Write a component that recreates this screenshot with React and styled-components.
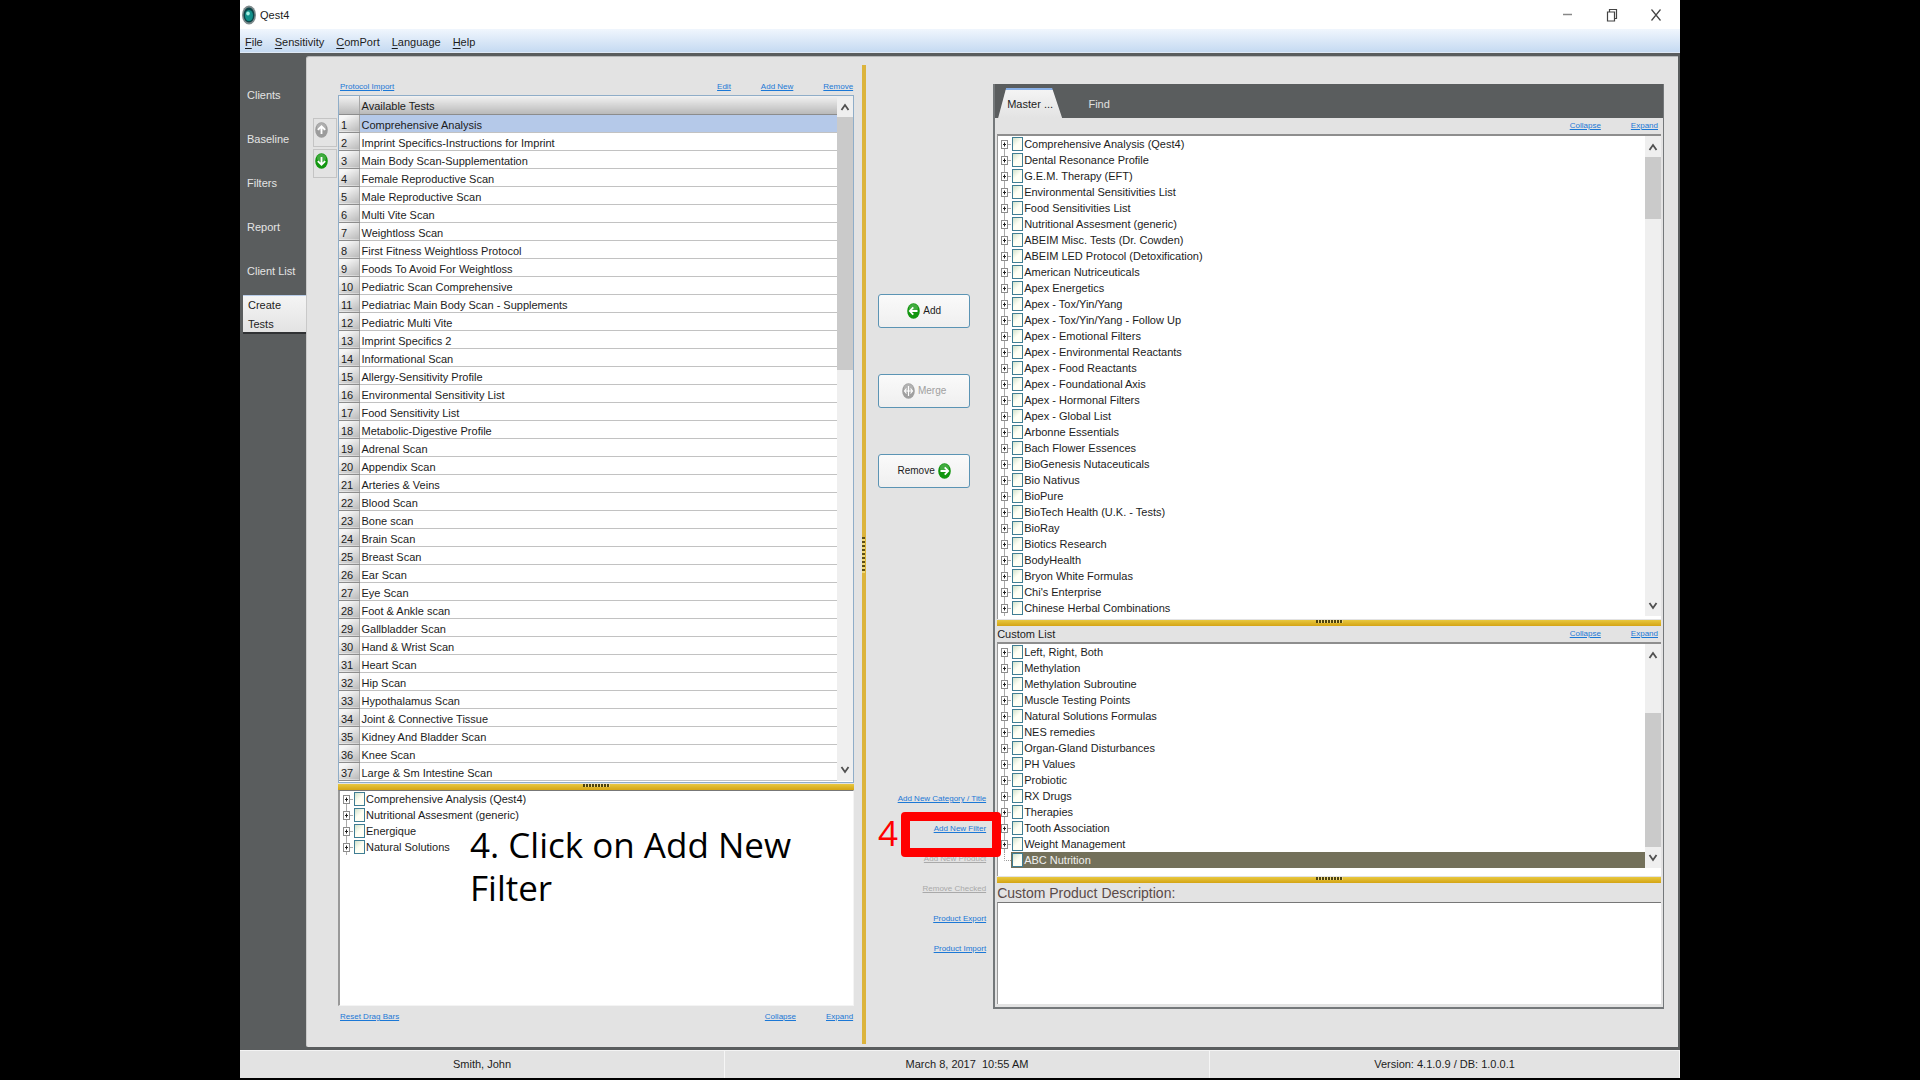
import React from 'react';
import styled, {createGlobalStyle} from 'styled-components';

const tests = [
    'Comprehensive Analysis', 'Imprint Specifics-Instructions for Imprint', 'Main Body Scan-Supplementation',
    'Female Reproductive Scan', 'Male Reproductive Scan', 'Multi Vite Scan', 'Weightloss Scan',
    'First Fitness Weightloss Protocol', 'Foods To Avoid For Weightloss', 'Pediatric Scan Comprehensive',
    'Pediatriac Main Body Scan - Supplements', 'Pediatric Multi Vite', 'Imprint Specifics 2',
    'Informational Scan', 'Allergy-Sensitivity Profile', 'Environmental Sensitivity List',
    'Food Sensitivity List', 'Metabolic-Digestive Profile', 'Adrenal Scan', 'Appendix Scan',
    'Arteries & Veins', 'Blood Scan', 'Bone scan', 'Brain Scan', 'Breast Scan', 'Ear Scan', 'Eye Scan',
    'Foot & Ankle scan', 'Gallbladder Scan', 'Hand & Wrist Scan', 'Heart Scan', 'Hip Scan',
    'Hypothalamus Scan', 'Joint & Connective Tissue', 'Kidney And Bladder Scan', 'Knee Scan',
    'Large & Sm Intestine Scan'
];

const selectedTree = ['Comprehensive Analysis (Qest4)', 'Nutritional Assesment (generic)', 'Energique', 'Natural Solutions'];

const masterTree = [
    'Comprehensive Analysis (Qest4)', 'Dental Resonance Profile', 'G.E.M. Therapy (EFT)',
    'Environmental Sensitivities List', 'Food Sensitivities List', 'Nutritional Assesment (generic)',
    'ABEIM Misc. Tests (Dr. Cowden)', 'ABEIM LED Protocol (Detoxification)', 'American Nutriceuticals',
    'Apex Energetics', 'Apex - Tox/Yin/Yang', 'Apex - Tox/Yin/Yang - Follow Up', 'Apex - Emotional Filters',
    'Apex - Environmental Reactants', 'Apex - Food Reactants', 'Apex - Foundational Axis',
    'Apex - Hormonal Filters', 'Apex - Global List', 'Arbonne Essentials', 'Bach Flower Essences',
    'BioGenesis Nutaceuticals', 'Bio Nativus', 'BioPure', 'BioTech Health (U.K. - Tests)', 'BioRay',
    'Biotics Research', 'BodyHealth', 'Bryon White Formulas', "Chi's Enterprise", 'Chinese Herbal Combinations'
];

const customTree = [
    'Left, Right, Both', 'Methylation', 'Methylation Subroutine', 'Muscle Testing Points',
    'Natural Solutions Formulas', 'NES remedies', 'Organ-Gland Disturbances', 'PH Values', 'Probiotic',
    'RX Drugs', 'Therapies', 'Tooth Association', 'Weight Management', 'ABC Nutrition'
];

function ArrowIcon({turn = 0, color = '#12960f', both}) {
    return (
        <svg width="13" height="16" viewBox="0 0 13 16" aria-hidden="true">
            <ellipse cx="6.5" cy="8" rx="6.3" ry="7.8" fill={color} />
            <ellipse cx="6.5" cy="5" rx="4.5" ry="4" fill="#fff" opacity="0.2" />
            <g transform={`rotate(${turn} 6.5 8)`} fill="none" stroke="#fff" strokeWidth="1.8">
                {both
                    ? <path d="M6.5 3v10M2.5 8h8M4.5 5.5L2.5 8l2 2.5M8.5 5.5l2 2.5-2 2.5" strokeWidth="1.2" />
                    : <path d="M10.5 8H3M6.3 4.3L2.8 8l3.5 3.7" />}
            </g>
        </svg>
    )
}

function Chevron({down}) {
    return (
        <svg width="10" height="8" viewBox="0 0 10 8" aria-hidden="true">
            <path d={down ? 'M1.5 1L5 6l3.5-5' : 'M1.5 7L5 2l3.5 5'} fill="none" stroke="#505050" strokeWidth="1.8" />
        </svg>
    )
}

function Scrollbar({before, size, after}) {
    return (
        <Track>
            <ScrollButton aria-label="Scroll up"><Chevron /></ScrollButton>
            <Space grow={before} />
            <Thumb grow={size} />
            <Space grow={after} />
            <ScrollButton aria-label="Scroll down"><Chevron down /></ScrollButton>
        </Track>
    )
}

function Tree({items, id, selected}) {
    return (
        <TreeList>
            {items.map((item, i) => (
                <TreeRow key={item}>
                    {item === selected
                        ? <svg width="13" height="16" aria-hidden="true"><path d="M6.5 0v8.5H13" fill="none" stroke="#999" strokeDasharray="1 1" /></svg>
                        : <Toggle aria-label={`Expand ${item}`}>
                            <svg width="13" height="16" aria-hidden="true">
                                <path d={i === 0 ? 'M6.5 12v4M10 8.5h3' : 'M6.5 0v16M10 8.5h3'} stroke="#aaa" />
                                <rect x="3.5" y="4.5" width="6" height="8" fill="#fff" stroke="#8c8c8c" />
                                <path d="M5 8.500h3M6.5 6.500v4" stroke="#222" />
                            </svg>
                        </Toggle>}
                    <TreeLabel htmlFor={`${id}-${i}`} active={item === selected ? 1 : 0}>
                        <Check type="checkbox" id={`${id}-${i}`} />
                        {item}
                    </TreeLabel>
                </TreeRow>
            ))}
        </TreeList>
    )
}

function Splitter() {
    return <GoldBar><Grip /></GoldBar>
}

function App() {
    return (
        <Stage>
            <GlobalStyle />
            <AppWindow>
                <TitleBar>
                    <svg width="14" height="20" viewBox="0 0 14 20" aria-hidden="true">
                        <ellipse cx="7" cy="10" rx="7" ry="9.5" fill="#7d8a8c" />
                        <ellipse cx="7" cy="10" rx="5.5" ry="7.5" fill="#0c4548" />
                        <ellipse cx="7" cy="10.5" rx="4" ry="5.5" fill="#11908a" />
                        <ellipse cx="6" cy="8.5" rx="1.8" ry="2" fill="#a5f0e2" />
                    </svg>
                    <Title>Qest4</Title>
                    <WindowButton aria-label="Minimize">
                        <svg width="12" height="14"><path d="M1 6.5h9" stroke="#888" strokeWidth="1.5" /></svg>
                    </WindowButton>
                    <WindowButton aria-label="Restore">
                        <svg width="12" height="14"><path d="M1.5 4h7v9h-7zM3.5 4V1.5h7v9H8.5" fill="none" stroke="#444" strokeWidth="1.2" /></svg>
                    </WindowButton>
                    <WindowButton aria-label="Close">
                        <svg width="12" height="14"><path d="M1.5 1.5l9 11M10.5 1.5l-9 11" stroke="#444" strokeWidth="1.2" /></svg>
                    </WindowButton>
                </TitleBar>
                <MenuBar>
                    {['File', 'Sensitivity', 'ComPort', 'Language', 'Help'].map(m => (
                        <MenuItem key={m}><u>{m[0]}</u>{m.slice(1)}</MenuItem>
                    ))}
                </MenuBar>
                <Body>
                    <Sidebar>
                        {['Clients', 'Baseline', 'Filters', 'Report', 'Client List'].map(s => (
                            <SideTab key={s}>{s}</SideTab>
                        ))}
                        <ActiveSideTab>Create Tests</ActiveSideTab>
                    </Sidebar>
                    <Content>
                        <OrderColumn>
                            <OrderButton aria-label="Move up" disabled><ArrowIcon turn={90} color="#9b9b9b" /></OrderButton>
                            <OrderButton aria-label="Move down"><ArrowIcon turn={-90} /></OrderButton>
                        </OrderColumn>
                        <LeftPanel>
                            <LinkBar>
                                <TextLink href="#import">Protocol Import</TextLink>
                                <LinkGroup>
                                    <TextLink href="#edit">Edit</TextLink>
                                    <TextLink href="#new">Add New</TextLink>
                                    <TextLink href="#remove">Remove</TextLink>
                                </LinkGroup>
                            </LinkBar>
                            <TableFrame>
                                <TestTable>
                                    <thead>
                                        <tr><NumberHead aria-label="Number" /><TestHead>Available Tests</TestHead></tr>
                                    </thead>
                                    <tbody>
                                        {tests.map((test, i) => (
                                            <tr key={test}>
                                                <NumberCell>{i + 1}</NumberCell>
                                                <TestCell active={i === 0 ? 1 : 0}>{test}</TestCell>
                                            </tr>
                                        ))}
                                    </tbody>
                                </TestTable>
                                <Scrollbar before={0} size={254} after={390} />
                            </TableFrame>
                            <Splitter />
                            <SelectedBox>
                                <Tree items={selectedTree} id="selected" />
                                <Callout>4. Click on Add New Filter</Callout>
                            </SelectedBox>
                            <LinkBar>
                                <TextLink href="#reset">Reset Drag Bars</TextLink>
                                <LinkGroup>
                                    <TextLink href="#collapse">Collapse</TextLink>
                                    <TextLink href="#expand">Expand</TextLink>
                                </LinkGroup>
                            </LinkBar>
                        </LeftPanel>
                        <VerticalBar><SideGrip /></VerticalBar>
                        <Actions>
                            <ActionButton><ArrowIcon />Add</ActionButton>
                            <ActionButton disabled><ArrowIcon color="#a0a0a0" both />Merge</ActionButton>
                            <ActionButton>Remove<ArrowIcon turn={180} /></ActionButton>
                            <ActionLinks>
                                <TextLink href="#category">Add New Category / Title</TextLink>
                                <Marked>
                                    <StepNumber>4</StepNumber>
                                    <Highlight />
                                    <TextLink href="#filter">Add New Filter</TextLink>
                                </Marked>
                                <TextLink href="#product" muted="true">Add New Product</TextLink>
                                <TextLink href="#checked" muted="true">Remove Checked</TextLink>
                                <TextLink href="#export">Product Export</TextLink>
                                <TextLink href="#product-import">Product Import</TextLink>
                            </ActionLinks>
                        </Actions>
                        <RightPanel>
                            <TabStrip>
                                <ActiveTab>Master ...</ActiveTab>
                                <Tab>Find</Tab>
                            </TabStrip>
                            <PanelBar>
                                <span />
                                <LinkGroup>
                                    <TextLink href="#collapse-master">Collapse</TextLink>
                                    <TextLink href="#expand-master">Expand</TextLink>
                                </LinkGroup>
                            </PanelBar>
                            <TreeBox room={3}>
                                <Tree items={masterTree} id="master" />
                                <Scrollbar before={0} size={62} after={376} />
                            </TreeBox>
                            <Splitter />
                            <PanelBar>
                                Custom List
                                <LinkGroup>
                                    <TextLink href="#collapse-custom">Collapse</TextLink>
                                    <TextLink href="#expand-custom">Expand</TextLink>
                                </LinkGroup>
                            </PanelBar>
                            <TreeBox room={8}>
                                <Tree items={customTree} id="custom" selected="ABC Nutrition" />
                                <Scrollbar before={50} size={139} after={0} />
                            </TreeBox>
                            <Splitter />
                            <DescriptionLabel htmlFor="description">Custom Product Description:</DescriptionLabel>
                            <Description id="description" />
                        </RightPanel>
                    </Content>
                </Body>
                <StatusBar>
                    <Status>Smith, John</Status>
                    <Status>March 8, 2017&nbsp; 10:55 AM</Status>
                    <Status>Version: 4.1.0.9 / DB: 1.0.0.1</Status>
                </StatusBar>
            </AppWindow>
        </Stage>
    )
}

const GlobalStyle = createGlobalStyle`
    * {
        box-sizing: border-box;
    }
    body {
        margin: 0;
        background: #000;
        color: #1c1c1c;
        font: 11px/16px "Liberation Sans", Arial, sans-serif;
    }
    button, input, textarea {
        margin: 0;
        padding: 0;
        border: 0;
        background: none;
        color: inherit;
        font: inherit;
    }
    svg {
        display: block;
        flex: none;
    }
`

const Stage = styled.div`
    display: flex;
    min-height: 100vh;
    padding: 0 12.5% 2px;
`

const AppWindow = styled.div`
    flex: 1;
    display: flex;
    flex-direction: column;
    min-width: 0;
    background: #5a5d5e;
`

const TitleBar = styled.header`
    display: flex;
    align-items: center;
    height: 29px;
    padding: 0 2px;
    background: #fff;
`

const Title = styled.span`
    flex: 1;
    padding-left: 4px;
`

const WindowButton = styled.button`
    display: flex;
    justify-content: center;
    width: 44px;
`

const MenuBar = styled.nav`
    display: flex;
    gap: 12px;
    height: 24px;
    padding: 2px 5px 0;
    background: linear-gradient(#f0f6fd, #c5daf2);
    border-bottom: 1px solid #dfe9f5;
`

const MenuItem = styled.button`
    u {
        text-underline-offset: 2px;
    }
`

const Body = styled.div`
    flex: 1;
    display: flex;
    padding: 3px 2px 3px 0;
`

const Sidebar = styled.aside`
    display: flex;
    flex-direction: column;
    width: 66px;
    padding-top: 17px;
    color: #e4e4e4;
`

const SideTab = styled.button`
    height: 44px;
    padding-left: 7px;
    text-align: left;
`

const ActiveSideTab = styled(SideTab)`
    height: 39px;
    margin: 2px 0 0 3px;
    padding: 0 20px 0 5px;
    line-height: 19px;
    color: #222;
    background: linear-gradient(#f4f4f4, #e3e3e3);
    border-top: 1px solid #b8cce8;
    border-bottom: 2px solid #303234;
`

const Content = styled.main`
    flex: 1;
    display: flex;
    min-width: 0;
    padding: 8px 14px 3px 6px;
    background: #e3e3e3;
    border-top: 1px solid #b6b8b9;
    border-left: 1px solid #c9c9c9;
    border-radius: 3px 0 0 2px;
`

const OrderColumn = styled.div`
    width: 25px;
    padding-top: 53px;
`

const OrderButton = styled.button`
    display: flex;
    align-items: flex-start;
    width: 24px;
    height: 29px;
    margin-bottom: 2px;
    padding: 3px 1px;
    border: 1px solid #c4c4c4;
`

const LeftPanel = styled.section`
    flex: 517;
    display: flex;
    flex-direction: column;
    min-width: 0;
    padding: 13px 0 19px;
`

const LinkBar = styled.div`
    display: flex;
    justify-content: space-between;
    padding: 0 1px 0 2px;
    line-height: 17px;
`

const LinkGroup = styled.div`
    display: flex;
    gap: 30px;
`

const TextLink = styled.a`
    color: ${props => props.muted ? '#a9a9a9' : '#1b78d6'};
    font-size: 8px;
    white-space: nowrap;
`

const TableFrame = styled.div`
    display: flex;
    padding-bottom: 1px;
    border: 1px solid #8fadc8;
    background: #fff;
`

const TestTable = styled.table`
    flex: 1;
    border-collapse: collapse;
    table-layout: fixed;
`

const NumberHead = styled.th`
    width: 20px;
    height: 18px;
    padding: 0;
    background: linear-gradient(#f2f2f2, #b9b9b9);
    border-right: 1px solid #a6a6a6;
    border-bottom: 1px solid #8c8c8c;
`

const TestHead = styled(NumberHead)`
    width: auto;
    padding: 3px 0 0 2px;
    border-right: 0;
    font-weight: normal;
    line-height: 14px;
    text-align: left;
`

const NumberCell = styled.td`
    padding: 3px 0 0 2px;
    line-height: 14px;
    background: linear-gradient(150deg, #f6f6f6 20%, #b8b8b8);
    border-right: 1px solid #a6a6a6;
    border-bottom: 1px solid #8c8c8c;
`

const TestCell = styled.td`
    padding: 3px 0 0 2px;
    line-height: 14px;
    background: ${props => props.active ? '#b5c9e9' : '#fff'};
    border-bottom: 1px solid #c2c2c2;
`

const Track = styled.div`
    display: flex;
    flex-direction: column;
    width: 16px;
    background: #efefef;
`

const ScrollButton = styled.button`
    display: flex;
    align-items: center;
    justify-content: center;
    height: 21px;
`

const Space = styled.div`
    flex: ${props => props.grow};
`

const Thumb = styled(Space)`
    background: #cacaca;
`

const GoldBar = styled.div`
    display: flex;
    justify-content: center;
    flex: none;
    height: 6px;
    margin-top: 1px;
    background: linear-gradient(#e8c840, #d4a414);
`

const Grip = styled.div`
    width: 27px;
    height: 3px;
    background: repeating-linear-gradient(90deg, #4d430f 0 2px, #f0d878 2px 3px);
`

const SelectedBox = styled.div`
    position: relative;
    flex: 1;
    margin-bottom: 2px;
    background: #fff;
    border: 1px solid #f4f4f4;
    border-top-color: #777;
    border-left: 2px solid #999;
`

const Callout = styled.p`
    position: absolute;
    top: 32px;
    left: 130px;
    width: 370px;
    margin: 0;
    color: #000;
    font: 35px/43px "Open Sans", sans-serif;
`

const VerticalBar = styled.div`
    display: flex;
    align-items: center;
    width: 4px;
    margin-left: 8px;
    background: #dcb43c;
`

const SideGrip = styled.div`
    width: 3px;
    height: 36px;
    background: repeating-linear-gradient(#5a4d14 0 2px, #f0d878 2px 4px);
`

const Actions = styled.section`
    display: flex;
    flex-direction: column;
    align-items: flex-start;
    gap: 46px;
    width: 127px;
    padding: 229px 0 0 12px;
`

const ActionButton = styled.button`
    display: flex;
    align-items: center;
    justify-content: center;
    gap: 3px;
    width: 92px;
    height: 34px;
    background: linear-gradient(#fafafa, #efefef);
    border: 1px solid #5b94b4;
    border-radius: 3px;
    font-size: 10px;
    &:disabled {
        color: #a0a0a0;
    }
`

const ActionLinks = styled.div`
    display: flex;
    flex-direction: column;
    align-items: flex-end;
    gap: 14px;
    width: 108px;
    margin-top: 257px;
`

const Marked = styled.div`
    position: relative;
    display: flex;
`

const Highlight = styled.div`
    position: absolute;
    top: -9px;
    right: -15px;
    width: 100px;
    height: 45px;
    border: 9px solid #f00;
    border-radius: 4px;
    pointer-events: none;
`

const StepNumber = styled.span`
    position: absolute;
    top: -10px;
    right: 88px;
    color: #f00;
    font: 35px/43px "Open Sans", sans-serif;
`

const RightPanel = styled.section`
    flex: 665;
    display: flex;
    flex-direction: column;
    min-width: 0;
    margin: 19px 0 35px;
    padding: 0 2px 3px;
    background: #e3e3e3;
    border: 1px solid #74787a;
    border-width: 0 1px 2px 2px;
`

const TabStrip = styled.div`
    display: flex;
    align-items: flex-end;
    height: 34px;
    margin: 0 -2px;
    background: #5a5d5e;
`

const Tab = styled.button`
    width: 74px;
    height: 30px;
    padding-top: 2px;
    color: #e0e0e0;
`

const ActiveTab = styled(Tab)`
    width: 64px;
    margin-left: 3px;
    color: #222;
    background: linear-gradient(#8ab0e6 2px, #f4f4f4 2px, #e3e3e3);
    clip-path: polygon(8px 0, 54px 0, 100% 100%, 0 100%);
`

const PanelBar = styled.div`
    display: flex;
    justify-content: space-between;
    padding-right: 3px;
`

const TreeBox = styled.div`
    display: flex;
    padding-bottom: ${props => props.room}px;
    background: #fff;
    border-top: 2px solid #8e8e8e;
    border-left: 1px solid #999;
`

const TreeList = styled.ul`
    flex: 1;
    margin: 0;
    padding: 0;
    list-style: none;
`

const TreeRow = styled.li`
    display: flex;
    height: 16px;
`

const Toggle = styled.button`
    width: 13px;
    height: 16px;
`

const TreeLabel = styled.label`
    display: flex;
    align-items: center;
    gap: 1px;
    padding-left: 1px;
    flex: ${props => props.active ? 1 : 'none'};
    color: ${props => props.active ? '#f0f0f0' : 'inherit'};
    background: ${props => props.active ? '#73705a' : 'none'};
`

const Check = styled.input`
    appearance: none;
    width: 11px;
    height: 14px;
    background: linear-gradient(135deg, #d2e2cc, #fffff4 50%);
    border: 1px solid #3f7d93;
`

const DescriptionLabel = styled.label`
    height: 19px;
    padding-top: 2px;
    color: #5a4a48;
    font-size: 14px;
    line-height: 17px;
`

const Description = styled.textarea`
    flex: 1;
    min-height: 60px;
    background: #fff;
    border-top: 1px solid #777;
    border-left: 1px solid #999;
    resize: none;
`

const StatusBar = styled.footer`
    display: grid;
    grid-template-columns: 485fr 485fr 470fr;
    height: 28px;
    background: #e3e3e3;
    border-top: 1px solid #f4f4f4;
`

const Status = styled.div`
    line-height: 27px;
    text-align: center;
    border-right: 1px solid #f6f6f6;
`

export default App
